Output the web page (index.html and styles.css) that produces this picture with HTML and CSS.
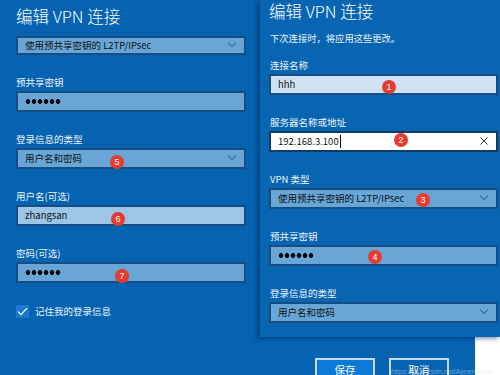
FILE: index.html
```html
<!DOCTYPE html>
<html>
<head>
<meta charset="utf-8">
<link rel="stylesheet" href="styles.css">
</head>
<body>
<div class="screen">
  <section class="pane left">
    <h1 class="title">编辑 VPN 连接</h1>
    <div class="control select first">使用预共享密钥的 L2TP/IPsec<span class="chev"></span></div>

    <div class="label">预共享密钥</div>
    <div class="control"><span class="dots"></span></div>

    <div class="label">登录信息的类型</div>
    <div class="control select">用户名和密码<span class="chev"></span><span class="badge b5">5</span></div>

    <div class="label">用户名(可选)</div>
    <div class="control light">zhangsan<span class="badge b6">6</span></div>

    <div class="label">密码(可选)</div>
    <div class="control"><span class="dots"></span><span class="badge b7">7</span></div>

    <label class="check-row">
      <span class="checkbox"><svg width="11" height="9" viewBox="0 0 11 9"><path d="M1 4.6 L4 7.6 L10 1.2" fill="none" stroke="#fff" stroke-width="1.2"/></svg></span>
      <span class="check-text">记住我的登录信息</span>
    </label>
  </section>

  <section class="right-col">
    <div class="card">
      <h1 class="title small">编辑 VPN 连接</h1>
      <p class="sub">下次连接时，将应用这些更改。</p>

      <div class="label r-first">连接名称</div>
      <div class="control pale">hhh<span class="badge b1">1</span></div>

      <div class="label">服务器名称或地址</div>
      <div class="control white">192.168.3.100<span class="caret"></span><span class="clear"><svg width="8" height="8" viewBox="0 0 8 8"><path d="M0.5 0.5 L7.5 7.5 M7.5 0.5 L0.5 7.5" stroke="#333" stroke-width="1"/></svg></span><span class="badge b2">2</span></div>

      <div class="label">VPN 类型</div>
      <div class="control select">使用预共享密钥的 L2TP/IPsec<span class="chev"></span><span class="badge b3">3</span></div>

      <div class="label">预共享密钥</div>
      <div class="control"><span class="dots"></span><span class="badge b4">4</span></div>

      <div class="label">登录信息的类型</div>
      <div class="control select">用户名和密码<span class="chev"></span></div>
    </div>
    <div class="footer">
      <div class="buttons">
        <button class="btn primary">保存</button>
        <button class="btn">取消</button>
      </div>
      <div class="blank"></div>
      <span class="watermark">https://blog.csdn.net/AimerDaniel</span>
    </div>
  </section>
</div>
</body>
</html>
```
FILE: styles.css
```css
* { box-sizing: border-box; }
html, body { margin: 0; padding: 0; }
body {
  width: 500px;
  height: 375px;
  overflow: hidden;
  background: #0563b1;
  font-family: "Noto Sans CJK SC", "Noto Sans", sans-serif;
  color: #fff;
}
.screen {
  display: flex;
  width: 500px;
  height: 375px;
}
.pane.left {
  width: 259px;
  padding: 0 13px 0 16px;
  display: flex;
  flex-direction: column;
}
.title {
  margin: 0;
  font-size: 16.5px;
  font-weight: 300;
  line-height: 22px;
  height: 30px;
  padding-top: 5px;
}
.title.small {
  padding-top: 0;
  height: 22px;
  margin-top: -3px;
}
.label {
  margin-top: 20px;
  height: 14px;
  line-height: 14px;
  font-size: 9.5px;
  color: #eef4fa;
}
.control {
  position: relative;
  margin-top: 2px;
  height: 21px;
  line-height: 17px;
  padding: 0 7px;
  border: 2px solid #174d80;
  background: #68a6d7;
  color: #111;
  font-size: 9.5px;
  white-space: nowrap;
}
.control.first { margin-top: 6px; height: 19px; line-height: 15px; }
.control.light { background: #9dc5e6; }
.control.pale { background: #cfe2f1; }
.control.white { background: #fff; border-color: #0f3c66; }
.chev {
  position: absolute;
  right: 9px;
  top: 3px;
  width: 6px;
  height: 6px;
  border-right: 1px solid #3f6a90;
  border-bottom: 1px solid #3f6a90;
  transform: rotate(45deg);
}
.control.first .chev { top: 2px; }
.dots {
  display: inline-block;
  width: 36px;
  height: 5px;
  vertical-align: 1px;
  background-image: radial-gradient(circle, #000 2.1px, transparent 2.6px);
  background-size: 6px 5px;
  background-repeat: no-repeat;
  background-position: 0 0, 6px 0, 12px 0, 18px 0, 24px 0, 30px 0;
}
.dots {
  background-image:
    radial-gradient(circle, #000 2.1px, transparent 2.6px),
    radial-gradient(circle, #000 2.1px, transparent 2.6px),
    radial-gradient(circle, #000 2.1px, transparent 2.6px),
    radial-gradient(circle, #000 2.1px, transparent 2.6px),
    radial-gradient(circle, #000 2.1px, transparent 2.6px),
    radial-gradient(circle, #000 2.1px, transparent 2.6px);
}
.caret {
  display: inline-block;
  width: 1px;
  height: 13px;
  background: #000;
  vertical-align: -3px;
  margin-left: 1px;
}
.clear {
  position: absolute;
  right: 8px;
  top: 4px;
  line-height: 0;
}
.badge {
  position: absolute;
  width: 14px;
  height: 14px;
  border-radius: 50%;
  background: #e83a2f;
  color: #fff;
  font-size: 9px;
  line-height: 14px;
  text-align: center;
  font-family: "Liberation Sans", sans-serif;
}
.b5 { left: 92px; top: 5px; }
.b6 { left: 93px; top: 5px; }
.b7 { left: 97px; top: 5px; }
.b1 { left: 111px; top: 4px; }
.b2 { left: 123px; top: 0px; }
.b3 { left: 145px; top: 3px; }
.b4 { left: 97px; top: 3px; }

.check-row {
  display: flex;
  align-items: center;
  margin-top: 21px;
  height: 14px;
}
.checkbox {
  width: 13px;
  height: 13px;
  background: #1d78cf;
  display: flex;
  align-items: center;
  justify-content: center;
}
.check-text {
  margin-left: 6px;
  font-size: 9.5px;
  color: #eef4fa;
}

.right-col {
  flex: 1;
  display: flex;
  flex-direction: column;
}
.card {
  height: 337px;
  flex-shrink: 0;
  background: #0865b2;
  border-left: 1px solid #0a4f8e;
  padding: 3px 2px 0 9px;
  box-shadow: -2px 2px 4px rgba(0, 30, 70, 0.45);
  display: flex;
  flex-direction: column;
  position: relative;
  z-index: 1;
}
.sub {
  margin: 9px 0 0 1px;
  height: 14px;
  line-height: 14px;
  font-size: 9.3px;
  color: #eef4fa;
}
.card .label { margin-top: 20px; margin-left: 1px; }
.card .label.r-first { margin-top: 13px; }
.card .control { margin-top: 2px; }
.footer {
  flex: 1;
  position: relative;
  display: flex;
}
.buttons {
  flex: 1;
  display: flex;
  gap: 14px;
  padding: 21px 0 0 56px;
}
.btn {
  width: 60px;
  height: 24px;
  flex-shrink: 0;
  border: 2px solid #c6d9ea;
  background: transparent;
  color: #fff;
  font-family: "Noto Sans CJK SC", sans-serif;
  font-size: 10.5px;
  padding: 0;
  line-height: 18px;
}
.btn.primary {
  background: #0b79d6;
}
.blank {
  width: 25px;
  background: #fff;
}
.watermark {
  position: absolute;
  left: 132px;
  top: 31px;
  font-size: 7px;
  color: rgba(220, 230, 240, 0.5);
  font-family: "Liberation Sans", sans-serif;
  white-space: nowrap;
}
```
